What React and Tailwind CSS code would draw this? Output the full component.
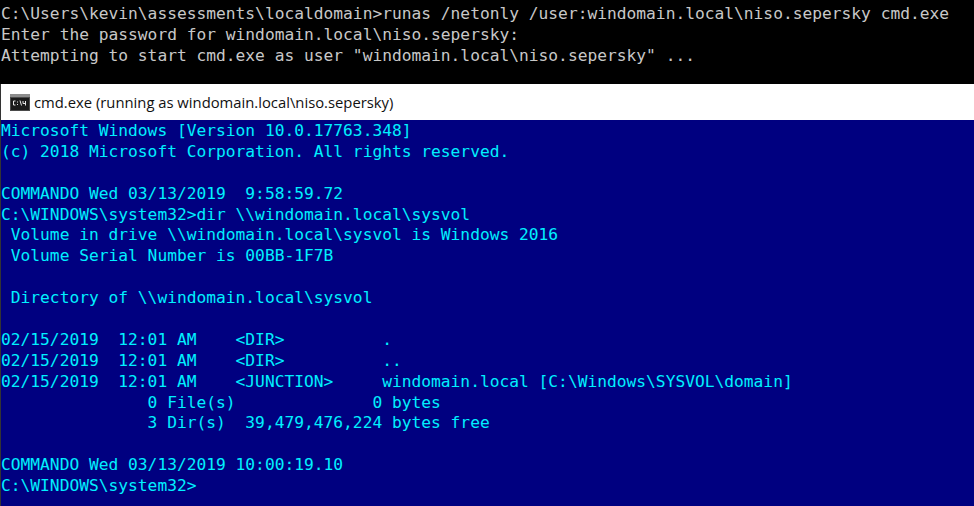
const top = [
  'C:\\Users\\kevin\\assessments\\localdomain>runas /netonly /user:windomain.local\\niso.sepersky cmd.exe',
  'Enter the password for windomain.local\\niso.sepersky:',
  'Attempting to start cmd.exe as user "windomain.local\\niso.sepersky" ...',
];
const body = [
  'Microsoft Windows [Version 10.0.17763.348]',
  '(c) 2018 Microsoft Corporation. All rights reserved.',
  '',
  'COMMANDO Wed 03/13/2019  9:58:59.72',
  'C:\\WINDOWS\\system32>dir \\\\windomain.local\\sysvol',
  ' Volume in drive \\\\windomain.local\\sysvol is Windows 2016',
  ' Volume Serial Number is 00BB-1F7B',
  '',
  ' Directory of \\\\windomain.local\\sysvol',
  '',
  '02/15/2019  12:01 AM    <DIR>          .',
  '02/15/2019  12:01 AM    <DIR>          ..',
  '02/15/2019  12:01 AM    <JUNCTION>     windomain.local [C:\\Windows\\SYSVOL\\domain]',
  '               0 File(s)              0 bytes',
  '               3 Dir(s)  39,479,476,224 bytes free',
  '',
  'COMMANDO Wed 03/13/2019 10:00:19.10',
  'C:\\WINDOWS\\system32>',
];
const mono = "font-['DejaVu_Sans_Mono',monospace] text-[16.24px] leading-[20.9px] whitespace-pre";

function Lines({ items, className }) {
  return (
    <div className={mono + ' ' + className}>
      {items.map((l, i) => (
        <div key={i} className="h-[20.9px]">{l}</div>
      ))}
    </div>
  );
}

function CmdIcon() {
  return (
    <svg width="20" height="17" viewBox="0 0 20 17" className="shrink-0">
      <rect width="20" height="17" fill="#4a4a4a" />
      <rect x="0" y="0" width="20" height="3" fill="#8c8c8c" />
      <rect x="1" y="4" width="18" height="12" fill="#1a1a1a" />
      <path d="M5.500 7H3.500v4h2M7.500 7.500v1M7.500 10v1M10 6.500l1.500 5M13 7v2.500h3M15.500 7v4.500" stroke="#e6e6e6" strokeWidth="1" fill="none" />
    </svg>
  );
}

export default function App() {
  return (
    <div className="w-[974px] h-[506px] overflow-hidden flex flex-col bg-black">
      <div className="h-[84px] shrink-0 bg-black pt-[4px] pl-[1px]">
        <Lines items={top} className="text-[#c8c8c8]" />
      </div>
      <div className="h-[36px] shrink-0 bg-white border-l border-[#333333] flex items-center gap-[4px] pl-[9px] pt-[1px] font-['Open_Sans',sans-serif] text-[14.8px] text-[#111111]">
        <CmdIcon />
        <span>cmd.exe (running as windomain.local\niso.sepersky)</span>
      </div>
      <div className="flex-1 bg-[#000080] border-l border-[#333333] pt-[1px]">
        <Lines items={body} className="text-[#00f0ff]" />
      </div>
    </div>
  );
}
